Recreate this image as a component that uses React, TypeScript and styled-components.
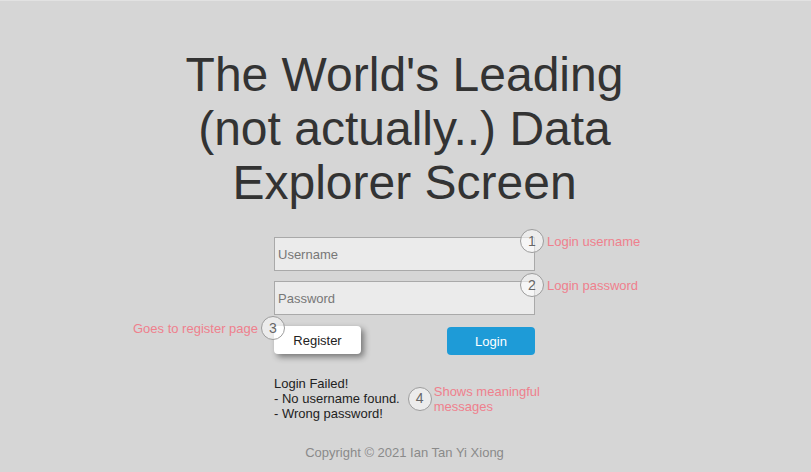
import React from "react";
import styled, { createGlobalStyle } from "styled-components";

const GlobalStyle = createGlobalStyle`
  html, body {
    margin: 0;
    padding: 0;
    background: #d6d6d6;
    font-family: "Liberation Sans", Arial, sans-serif;
  }
  * { box-sizing: border-box; }
`;

const Page = styled.div`
  min-height: 472px;
  border-top: 1px solid #e2e2e2;
  display: flex;
  flex-direction: column;
  align-items: center;
  padding-top: 47px;
  padding-right: 2px;
`;

const Title = styled.h1`
  margin: 0;
  width: 450px;
  text-align: center;
  font-size: 48px;
  line-height: 54px;
  font-weight: normal;
  color: #333333;
`;

const Form = styled.div`
  width: 261px;
  margin-top: 27px;
  display: flex;
  flex-direction: column;
`;

const Field = styled.div`
  position: relative;
  height: 34px;
  & + & {
    margin-top: 10px;
  }
`;

const Input = styled.input`
  display: block;
  width: 100%;
  height: 34px;
  margin: 0;
  border: 1px solid #a9a9a9;
  background: #ebebeb;
  padding: 0 3px;
  font-family: "Liberation Sans", Arial, sans-serif;
  font-size: 13px;
  color: #222;
  outline: none;
  &::placeholder {
    color: #777777;
  }
`;

const ButtonRow = styled.div`
  display: flex;
  justify-content: space-between;
  align-items: flex-start;
  margin-top: 11px;
`;

const RegisterButton = styled.button`
  position: relative;
  width: 87px;
  height: 28px;
  border: none;
  border-radius: 4px;
  background: #ffffff;
  color: #222222;
  font-family: "Liberation Sans", Arial, sans-serif;
  font-size: 13px;
  box-shadow: 3px 3px 6px rgba(0, 0, 0, 0.45);
  padding: 0;
  cursor: pointer;
`;

const LoginButton = styled.button`
  width: 88px;
  height: 28px;
  margin-top: 1px;
  border: none;
  border-radius: 4px;
  background: #1e9bd7;
  color: #ffffff;
  font-family: "Liberation Sans", Arial, sans-serif;
  font-size: 13px;
  padding: 0;
  cursor: pointer;
`;

const Messages = styled.div`
  position: relative;
  align-self: flex-start;
  margin-top: 21px;
  font-size: 13px;
  line-height: 15px;
  color: #222222;
  white-space: nowrap;
`;

const Annotation = styled.div<{
  $top?: string;
  $left?: string;
  $right?: string;
  $center?: boolean;
  $gap?: number;
}>`
  position: absolute;
  display: flex;
  align-items: center;
  gap: ${(p) => p.$gap ?? 3}px;
  white-space: nowrap;
  top: ${(p) => p.$top ?? "auto"};
  left: ${(p) => p.$left ?? "auto"};
  right: ${(p) => p.$right ?? "auto"};
  transform: ${(p) => (p.$center ? "translateY(-50%)" : "none")};
  z-index: 2;
`;

const Badge = styled.span`
  flex: none;
  width: 24px;
  height: 24px;
  border-radius: 50%;
  border: 1px solid #9c9c9c;
  background: rgba(255, 255, 255, 0.55);
  color: #666666;
  font-size: 14px;
  display: flex;
  align-items: center;
  justify-content: center;
`;

const Note = styled.span`
  color: #ef808d;
  font-size: 13px;
  line-height: 15px;
  text-align: left;
`;

const Copyright = styled.div`
  margin-top: 24px;
  font-size: 13px;
  line-height: 15px;
  color: #8a8a8a;
`;

export default function App() {
  return (
    <>
      <GlobalStyle />
      <Page>
        <Title>The World's Leading (not actually..) Data Explorer Screen</Title>
        <Form>
          <Field>
            <Input placeholder="Username" />
            <Annotation $top="-8px" $left="246px">
              <Badge>1</Badge>
              <Note>Login username</Note>
            </Annotation>
          </Field>
          <Field>
            <Input type="password" placeholder="Password" />
            <Annotation $top="-8px" $left="246px">
              <Badge>2</Badge>
              <Note>Login password</Note>
            </Annotation>
          </Field>
          <ButtonRow>
            <RegisterButton>
              Register
              <Annotation $top="-10px" $right="calc(100% - 11px)">
                <Note>Goes to register page</Note>
                <Badge>3</Badge>
              </Annotation>
            </RegisterButton>
            <LoginButton>Login</LoginButton>
          </ButtonRow>
          <Messages>
            Login Failed!
            <br />- No username found.
            <br />- Wrong password!
            <Annotation $top="50%" $left="calc(100% + 8px)" $center $gap={2}>
              <Badge>4</Badge>
              <Note>
                Shows meaningful
                <br />
                messages
              </Note>
            </Annotation>
          </Messages>
        </Form>
        <Copyright>Copyright © 2021 Ian Tan Yi Xiong</Copyright>
      </Page>
    </>
  );
}
